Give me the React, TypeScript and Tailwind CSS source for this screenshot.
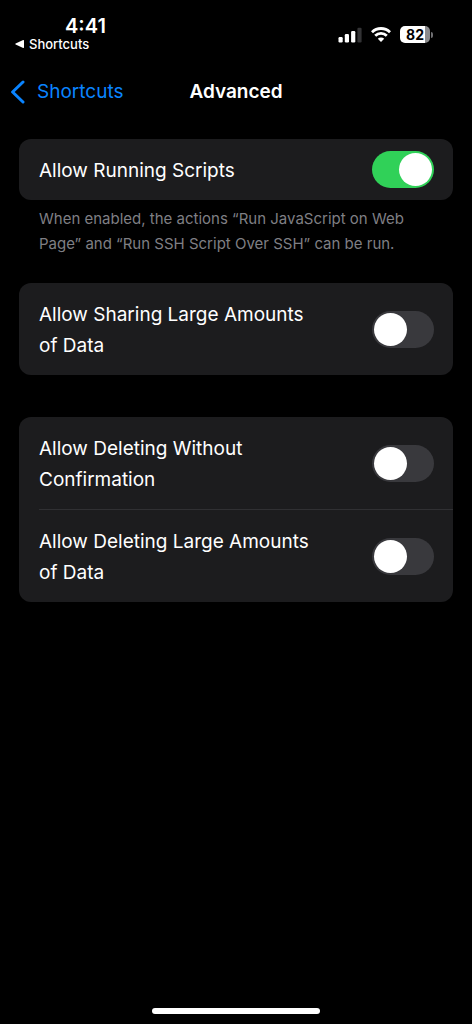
import { useState } from "react";

type Setting = { id: string; label: string; enabled: boolean };

const scripts: Setting[] = [{ id: "scripts", label: "Allow Running Scripts", enabled: true }];

const sharing: Setting[] = [{ id: "sharing", label: "Allow Sharing Large Amounts of Data", enabled: false }];

const deleting: Setting[] = [
  { id: "delete-silent", label: "Allow Deleting Without Confirmation", enabled: false },
  { id: "delete-large", label: "Allow Deleting Large Amounts of Data", enabled: false }
];

export default function App() {
  return (
    <div className="flex min-h-screen flex-col bg-black font-['Inter','Liberation_Sans',sans-serif] text-white">
      <StatusBar />
      <header className="grid grid-cols-[1fr_auto_1fr] items-center px-2.5 pt-6 text-[19px] leading-[31px]">
        <a href="#shortcuts" className="flex items-center gap-3 text-[#0a84ff]">
          <svg viewBox="0 0 15 24" className="h-6 w-[15px]" fill="none" stroke="currentColor" strokeWidth="3" strokeLinecap="round" strokeLinejoin="round" aria-hidden="true">
            <path d="M13 2 2.6 12 13 22" />
          </svg>
          Shortcuts
        </a>
        <h1 className="font-semibold">Advanced</h1>
      </header>

      <main className="px-[19px] pt-8">
        <SettingGroup settings={scripts} />
        <p className="mt-1.5 px-5 text-[15px] leading-[25px] text-[#7f7f84]">
          When enabled, the actions “Run JavaScript on Web Page” and “Run SSH Script Over SSH” can be run.
        </p>
        <div className="mt-[27px] space-y-[42px]">
          <SettingGroup settings={sharing} />
          <SettingGroup settings={deleting} />
        </div>
      </main>

      <div className="mx-auto mt-auto mb-2.5 h-1.5 w-[168px] rounded-full bg-white" />
    </div>
  );
}

function SettingGroup({ settings }: { settings: Setting[] }) {
  return (
    <ul className="rounded-xl bg-[#1c1c1e] pl-5">
      {settings.map((setting) => (
        <SettingRow key={setting.id} setting={setting} />
      ))}
    </ul>
  );
}

function SettingRow({ setting }: { setting: Setting }) {
  const [enabled, setEnabled] = useState(setting.enabled);

  return (
    <li className="flex items-center justify-between gap-14 border-[#303033] pr-[19px] not-first:border-t">
      <label htmlFor={setting.id} className="pt-4 pb-3.5 text-[19px] leading-[31px]">
        {setting.label}
      </label>
      <input
        id={setting.id}
        type="checkbox"
        role="switch"
        checked={enabled}
        onChange={(event) => setEnabled(event.target.checked)}
        className="flex h-[37px] w-[62px] shrink-0 appearance-none items-center rounded-full bg-[#39393d] px-0.5 transition-colors before:size-[33px] before:rounded-full before:bg-white before:content-[''] checked:justify-end checked:bg-[#30d158]"
      />
    </li>
  );
}

function StatusBar() {
  return (
    <div className="flex items-start justify-between pt-4 pr-[39px] pl-[15px]">
      <div>
        <p className="pl-[50px] text-xl leading-5 font-semibold">4:41</p>
        <a href="#shortcuts" className="flex items-center gap-[5px] text-[13px] leading-4 font-medium">
          <svg viewBox="0 0 9 8" className="h-2 w-[9px]" fill="currentColor" aria-hidden="true">
            <path d="M8.2.1C8.7-.1 9 .2 9 .7v6.6c0 .5-.3.8-.8.6L.6 4.4c-.4-.2-.4-.6 0-.8z" />
          </svg>
          Shortcuts
        </a>
      </div>
      <div className="flex items-center gap-[9px] pt-2.5">
        <svg viewBox="0 0 24 16" className="h-4 w-6" fill="currentColor" role="img" aria-label="Cellular signal">
          <rect x="0.5" y="10" width="4.2" height="5.5" rx="1.2" />
          <rect x="6.8" y="7" width="4.2" height="8.5" rx="1.2" />
          <rect x="13.1" y="4" width="4.2" height="11.5" rx="1.2" />
          <rect x="19.4" y="0.8" width="4.2" height="14.7" rx="1.2" fill="#333335" />
        </svg>
        <svg viewBox="0 0 20 15" className="h-[15px] w-5" fill="none" stroke="currentColor" strokeWidth="2.8" role="img" aria-label="Wi-Fi">
          <path d="M1 5.2a12.8 12.8 0 0 1 18 0" />
          <path d="M4.2 8.8a8.3 8.3 0 0 1 11.6 0" />
          <path d="M10 15 6.8 11.8a4.6 4.6 0 0 1 6.4 0z" fill="currentColor" stroke="none" />
        </svg>
        <div className="flex items-center gap-px">
          <div className="flex h-[17px] w-[30px] items-center justify-center rounded-[5px] bg-linear-to-r from-white from-83% to-[#8b8b8d] to-83% text-sm leading-4 font-bold text-black">
            82
          </div>
          <div className="h-1.5 w-0.5 rounded-r-full bg-[#6f6f72]" />
        </div>
      </div>
    </div>
  );
}
